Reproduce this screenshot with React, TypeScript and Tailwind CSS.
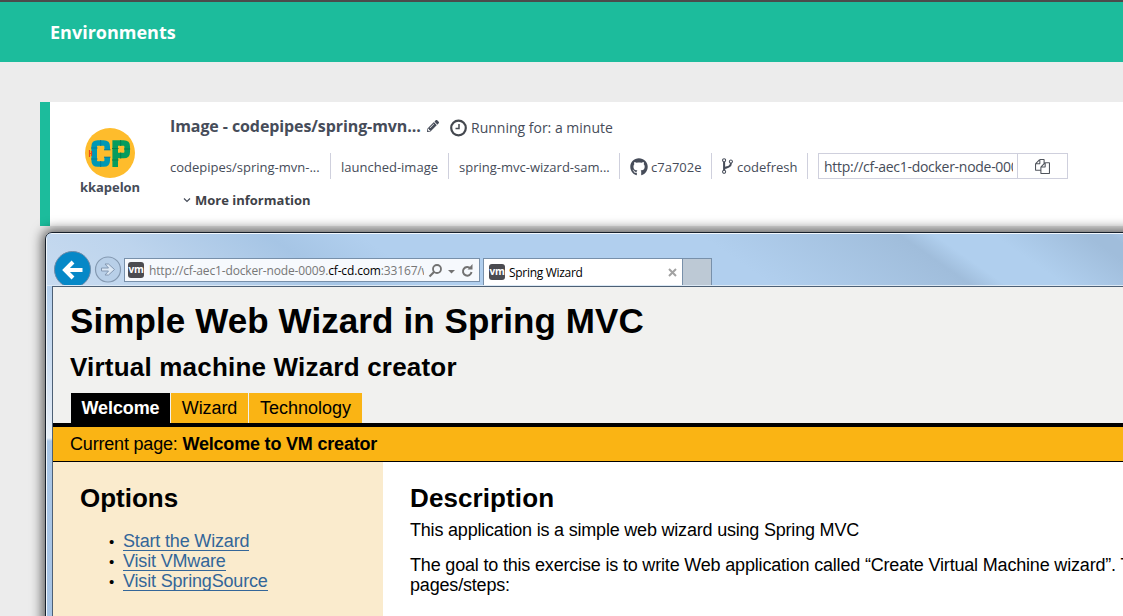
import React from "react";
import { FaGithub, FaPencilAlt } from "react-icons/fa";

const sans = "font-['Open_Sans',sans-serif]";

function Avatar() {
  return (
    <svg width="50" height="50" viewBox="0 0 50 50" className="block">
      <circle cx="25" cy="25" r="25" fill="#febc2c" />
      <path d="M22.200 22v-3.500q0-3.500-3.500-3.500h-6q-3.500 0-3.500 3.500v14q0 3.500 3.500 3.500h6q3.500 0 3.500-3.500V29" fill="none" stroke="#0098b4" strokeWidth="5.600" />
      <path d="M19 21.800h6.500M19 29.200h6.500M6 20h6.500M6 31h6.500M15.700 12v6M15.700 33v6" stroke="#067c98" strokeWidth="1" fill="none" />
      <path d="M30.200 39V15h8.500q3.500 0 3.500 3.500v5.500q0 3.500-3.500 3.500h-8.500" fill="none" stroke="#049c5e" strokeWidth="5.600" />
      <path d="M27 20.500h6.500M27 32h6.500M35.700 12v6M35.700 24.500v6M39 21h6.200" stroke="#067f4b" strokeWidth="1" fill="none" />
      <path d="M4.500 22v7M4.500 25.500h2M6.500 23v5" stroke="#e8461c" strokeWidth="1.200" fill="none" />
    </svg>
  );
}

function ClockIcon() {
  return (
    <svg width="17" height="18" viewBox="0 0 17 18" className="block shrink-0">
      <circle cx="8.500" cy="9" r="7.300" fill="none" stroke="#44484f" strokeWidth="2.200" />
      <path d="M9 5v4.500H5.500" fill="none" stroke="#44484f" strokeWidth="1.500" />
    </svg>
  );
}

function BranchIcon() {
  return (
    <svg width="19" height="18" viewBox="0 0 1792 1792" preserveAspectRatio="none" fill="#464c59" className="block">
      <path d="M672 1472q0-40-28-68t-68-28-68 28-28 68 28 68 68 28 68-28 28-68zm0-1152q0-40-28-68t-68-28-68 28-28 68 28 68 68 28 68-28 28-68zm640 128q0-40-28-68t-68-28-68 28-28 68 28 68 68 28 68-28 28-68zm96 0q0 52-26 96.500t-70 69.500q-2 287-226 414-67 38-203 81-128 40-169.500 71t-41.500 100v26q44 25 70 69.500t26 96.500q0 80-56 136t-136 56-136-56-56-136q0-52 26-96.500t70-69.500v-820q-44-25-70-69.500t-26-96.500q0-80 56-136t136-56 136 56 56 136q0 52-26 96.500t-70 69.500v497q54-26 154-57 55-17 87.500-29.500t70.500-31 59-39.500 40.500-51 28-69.500 8.500-91.500q-44-25-70-69.500t-26-96.500q0-80 56-136t136-56 136 56 56 136z" />
    </svg>
  );
}

function CopyIcon() {
  return (
    <svg width="15" height="15" viewBox="0 0 1792 1792" fill="#50545c" className="block">
      <path d="M1696 384q40 0 68 28t28 68v1216q0 40-28 68t-68 28h-960q-40 0-68-28t-28-68v-288h-544q-40 0-68-28t-28-68v-672q0-40 20-88t48-76l408-408q28-28 76-48t88-20h416q40 0 68 28t28 68v328q68-40 128-40h416zm-544 213l-299 299h299v-299zm-640-384l-299 299h299v-299zm196 647l316-316v-416h-384v416q0 40-28 68t-68 28h-416v640h512v-256q0-40 20-88t48-76zm956 804v-1152h-384v416q0 40-28 68t-68 28h-416v640h896z" />
    </svg>
  );
}

function VmBadge() {
  return (
    <span className="flex h-4 w-4 shrink-0 items-center justify-center rounded-[3px] bg-[#4b4b50] font-['Open_Sans',sans-serif] text-[10px] leading-[14px] font-bold tracking-[-0.300px] text-white">
      <span className="-mt-[3px]">vm</span>
    </span>
  );
}

function EnvironmentCard() {
  return (
    <section className="ml-10 flex h-[124px] border-l-10 border-[#1cbc9c] bg-white text-[#464c59]">
      <div className="w-[120px] shrink-0 pt-[26px]">
        <div className="ml-[35px]">
          <Avatar />
        </div>
        <div className="ml-[30px] text-[13px] leading-[18px] font-bold tracking-[-0.050px] whitespace-nowrap">kkapelon</div>
      </div>
      <div className="min-w-0 flex-1">
        <div className="flex h-[51px] items-center pb-1">
          <span className="w-[257px] shrink-0 text-base leading-5 font-bold tracking-[-0.090px] whitespace-nowrap">Image - codepipes/spring-mvn...</span>
          <FaPencilAlt className="h-3 w-3 shrink-0" />
          <span className="ml-[11px] flex items-center gap-1 pt-[4px]">
            <ClockIcon />
            <span className="-mt-px text-[14px] whitespace-nowrap">Running for: a minute</span>
          </span>
        </div>
        <div className="flex h-[26px] text-[13px] leading-[28px] whitespace-nowrap">
          <span className="w-[161px] shrink-0 border-r border-[#cfd0dd]">codepipes/spring-mvn-...</span>
          <span className="w-[118px] shrink-0 border-r border-[#cfd0dd] pl-[10px]">launched-image</span>
          <span className="w-[171px] shrink-0 border-r border-[#cfd0dd] pl-[10px]">spring-mvc-wizard-sam...</span>
          <span className="flex w-[92px] shrink-0 items-center gap-[3px] border-r border-[#cfd0dd] pl-[10px]">
            <FaGithub className="mt-px h-[18px] w-[18px]" />
            <span className="pt-[2px]">c7a702e</span>
          </span>
          <span className="flex w-[96px] shrink-0 items-center border-r border-[#cfd0dd] pl-[6px]">
            <BranchIcon />
            <span className="pt-[2px]">codefresh</span>
          </span>
          <span className="ml-[10px] flex w-[250px] shrink-0 border border-[#cfd0dd] leading-[26px]">
            <span className="w-[199px] border-r border-[#cfd0dd] pr-1 pl-[5px] text-[14px] leading-[26px] tracking-[-0.280px]">
              <span className="block h-6 overflow-hidden">http://cf-aec1-docker-node-0009</span>
            </span>
            <span className="flex flex-1 items-center justify-center pt-px">
              <CopyIcon />
            </span>
          </span>
        </div>
        <div className="mt-3 ml-[13px] flex items-center gap-1">
          <svg width="8" height="6" viewBox="0 0 8 6" className="block">
            <path d="M1 1.500l3 3 3-3" fill="none" stroke="#464c59" strokeWidth="1.200" />
          </svg>
          <span className="text-[13px] leading-[18px] font-bold text-[#3e4248]">More information</span>
        </div>
      </div>
    </section>
  );
}

function BrowserChrome() {
  return (
    <div className="flex h-[52px] items-end overflow-hidden border-b border-[#dce9f5] pl-[7px]">
      <svg width="70" height="36" viewBox="0 0 70 36" className="block shrink-0">
        <circle cx="18.500" cy="20.500" r="18" fill="#0688c7" stroke="#6f8ba8" strokeWidth="1" />
        <path d="M28.500 21H12M19 13l-8 8 8 8" fill="none" stroke="#fff" strokeWidth="4" />
        <circle cx="54" cy="20.500" r="12.500" fill="#b8cfe8" stroke="#8499b1" strokeWidth="1.200" />
        <path d="M47.500 19h7l-3.500-4h3.500l6 5.500-6 5.500h-3.500l3.500-4h-7z" fill="#dce8f5" stroke="#8498b2" strokeWidth="1" />
      </svg>
      <div className="mb-[3px] flex h-6 w-[356px] shrink-0 items-center border border-[#7890aa] bg-[#f6f9fd] pl-[3px] text-[12px]">
        <VmBadge />
        <span className="ml-[5px] w-[275px] overflow-hidden pt-[2px] tracking-[-0.150px] whitespace-nowrap text-[#777]">
          http://cf-aec1-docker-node-0009.<span className="text-black">cf-cd.com</span>:33167/w
        </span>
        <svg width="48" height="16" viewBox="0 0 48 16" className="mt-px ml-1 block shrink-0">
          <circle cx="9" cy="6" r="4" fill="none" stroke="#727272" strokeWidth="1.800" />
          <path d="M6 9L1.500 13.500" stroke="#727272" strokeWidth="2.200" />
          <path d="M20 7h7l-3.500 3.500z" fill="#727272" />
          <path d="M42.500 5.500A4.300 4.300 0 1 0 43.500 9" fill="none" stroke="#727272" strokeWidth="2" />
          <path d="M39.500 6.500h5V1z" fill="#727272" />
        </svg>
      </div>
      <div className="ml-[3px] flex h-[27px] w-[200px] shrink-0 items-center border border-b-0 border-[#7890aa] bg-white pl-[5px] text-[12px] text-black">
        <VmBadge />
        <span className="ml-1 w-[159px] pt-[2px] tracking-[-0.300px]">Spring Wizard</span>
        <svg width="9" height="9" viewBox="0 0 9 9" className="block">
          <path d="M1 1l7 7M8 1L1 8" stroke="#a2a2a2" strokeWidth="2" />
        </svg>
      </div>
      <div className="h-[27px] w-[29px] shrink-0 border-t border-r border-[#7890aa] bg-[#bdc9d5]" />
    </div>
  );
}

function Link({ children }: { children: React.ReactNode }) {
  return (
    <li className="flex h-5 items-start">
      <span className="w-[15px] pl-px text-[15px] leading-5 text-black">•</span>
      <span className="h-[19px] border-b border-[#336699] text-[18px] leading-[19px] tracking-[-0.170px]">{children}</span>
    </li>
  );
}

function WizardPage() {
  return (
    <div className="h-[330px] overflow-hidden border-t border-l border-[#4d6075] bg-white font-['Liberation_Sans',Arial,sans-serif] text-[18px] text-black">
      <div className="h-[136px] bg-[#f1f1ef] pl-[17px]">
        <h1 className="pt-[13px] text-[35px] leading-[42px] font-bold tracking-[0.100px] whitespace-nowrap">Simple Web Wizard in Spring MVC</h1>
        <h2 className="pt-[9px] text-[26px] leading-8 font-bold tracking-[0.200px] whitespace-nowrap">Virtual machine Wizard creator</h2>
        <div className="mt-[10px] ml-px flex h-[30px] gap-px leading-[30px]">
          <span className="w-[99px] bg-black text-center font-bold tracking-[-0.100px] text-white">Welcome</span>
          <span className="w-[77px] bg-[#fab414] text-center tracking-[-0.100px]">Wizard</span>
          <span className="w-[113px] bg-[#fab414] text-center">Technology</span>
        </div>
      </div>
      <div className="h-[39px] border-t-4 border-b border-black bg-[#fab414] pl-[17px] leading-[34px] tracking-[-0.190px] whitespace-nowrap">
        Current page: <b>Welcome to VM creator</b>
      </div>
      <div className="flex h-[154px]">
        <aside className="w-[330px] shrink-0 bg-[#faebcd] pt-5 pl-[27px]">
          <h2 className="text-[26px] leading-8 font-bold">Options</h2>
          <ul className="mt-[18px] ml-7 text-[#336699]">
            <Link>Start the Wizard</Link>
            <Link>Visit VMware</Link>
            <Link>Visit SpringSource</Link>
          </ul>
        </aside>
        <main className="pt-5 pl-[27px] leading-5 whitespace-nowrap">
          <h2 className="text-[26px] leading-8 font-bold tracking-[0.100px]">Description</h2>
          <p className="mt-[6px] tracking-[-0.200px]">This application is a simple web wizard using Spring MVC</p>
          <p className="mt-[15px] tracking-[-0.180px]">
            The goal to this exercise is to write Web application called “Create Virtual Machine wizard”. The wizard
            <br />
            pages/steps:
          </p>
        </main>
      </div>
    </div>
  );
}

export default function App() {
  return (
    <div className={`relative h-[616px] w-[1123px] overflow-hidden bg-[#ececec] ${sans}`}>
      <header className="flex h-[62px] items-center border-t-2 border-[#4b4b4b] bg-[#1cbc9c] pl-[50px] text-[18px] font-bold text-white">
        Environments
      </header>
      <div className="pt-10">
        <EnvironmentCard />
      </div>
      <div className="absolute top-[232px] left-[45px] h-[400px] w-[1100px] overflow-hidden rounded-tl-[7px] border border-[#17202b] bg-[linear-gradient(180deg,#b3cfed_0px,#b3cfed_50px,#dfe9f5_180px,#e8f0f8_205px,#a9c6e6_208px,#a6c3e4_400px)] shadow-[0_0_12px_3px_rgba(0,0,0,0.6)]">
        <div className="h-[400px] rounded-tl-[6px] border-t border-l border-[#f1f7fd]">
          <div className="bg-[linear-gradient(35deg,#c8dbf0_0%,#bdd4ed_12%,#a6c5e5_25%,#b1cfee_33%,#b1cfee_62%,#a0bddb_79%,#b0cfee_82%,#b0cfee_87%,#a0bddb_95%,#a0bddb_97%,#b0cfee_100%)]">
            <BrowserChrome />
          </div>
          <div className="pl-[5px]">
            <WizardPage />
          </div>
        </div>
      </div>
    </div>
  );
}
